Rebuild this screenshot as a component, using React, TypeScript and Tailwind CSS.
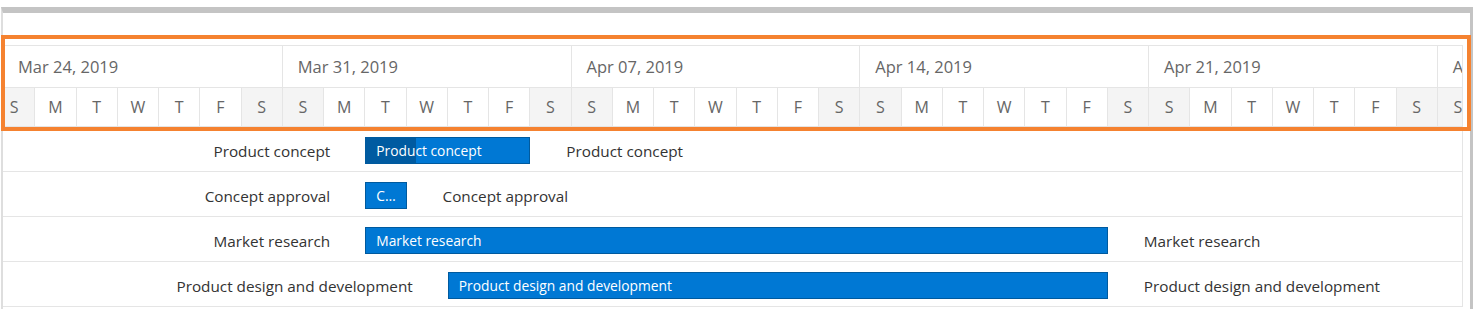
import React from "react";

const DAY = 41.25;
const DAYS = ["S", "M", "T", "W", "T", "F", "S"];
const weeks = ["Mar 24, 2019", "Mar 31, 2019", "Apr 07, 2019", "Apr 14, 2019", "Apr 21, 2019", "Apr 28, 2019"];

type Task = { name: string; start: number; end: number; progress?: number };

// start / end are day indexes counted from Sun Mar 24
const tasks: Task[] = [
  { name: "Product concept", start: 9, end: 13, progress: 50 },
  { name: "Concept approval", start: 9, end: 10 },
  { name: "Market research", start: 9, end: 27 },
  { name: "Product design and development", start: 11, end: 27 },
];

const TaskRow = ({ task }: { task: Task }) => {
  const width = (task.end - task.start) * DAY;
  return (
    <div className="flex h-[45px] items-center border-b border-[#e5e5e5] pt-[2px]">
      <span
        className="shrink-0 whitespace-nowrap pr-[35px] pt-[2px] text-right text-[15.3px] text-[#333]"
        style={{ width: task.start * DAY }}
      >
        {task.name}
      </span>
      <div
        className="relative flex h-[27px] shrink-0 items-center overflow-hidden border border-[#005a9e] bg-[#0078d4]"
        style={{ width }}
      >
        {task.progress ? (
          <div className="absolute inset-y-0 left-0 bg-[#005ba1]" style={{ width: task.progress }} />
        ) : null}
        <span className="relative truncate px-[10px] pt-[2px] text-[13.8px] text-white">{task.name}</span>
      </div>
      <span className="shrink-0 whitespace-nowrap pl-[36px] pt-[2px] text-[15.3px] text-[#333]">{task.name}</span>
    </div>
  );
};

export default function App() {
  return (
    <div
      className="relative h-[319px] w-[1473px] overflow-hidden bg-white pt-[7px] pl-[1px]"
      style={{ fontFamily: '"Open Sans", "Noto Sans", sans-serif' }}
    >
      <div className="flex w-[1472px] border-t-[6px] border-r-[3px] border-l-2 border-t-[#c4c4c4] border-r-[#c4c4c4] border-l-[#dedede] pt-[32px] pb-[2px]">
        <div className="w-[1460px] shrink-0 overflow-hidden border-r border-[#e5e5e5]">
          <div className="ml-[-9px] w-[1740px]">
            {/* header */}
            <div className="border-y border-[#e5e5e5]">
              <div className="flex h-[42px] border-b border-[#e5e5e5]">
                {weeks.map((w, i) => (
                  <div
                    key={w}
                    className={`flex w-[288.75px] shrink-0 items-center border-r border-[#e5e5e5] pt-[2px] text-[16.5px] text-[#666] ${
                      i === 0 ? "pl-[24px]" : "pl-[15px]"
                    }`}
                  >
                    {w}
                  </div>
                ))}
              </div>
              <div className="flex h-[38px]">
                {weeks.map((w) =>
                  DAYS.map((d, j) => (
                    <div
                      key={w + j}
                      className={`flex w-[41.25px] shrink-0 items-center justify-center border-r border-[#e5e5e5] text-[16px] text-[#666] ${
                        j === 0 || j === 6 ? "bg-[#f4f4f4]" : "bg-white"
                      }`}
                    >
                      {d}
                    </div>
                  ))
                )}
              </div>
            </div>
            {/* rows */}
            {tasks.map((t) => (
              <TaskRow key={t.name} task={t} />
            ))}
          </div>
        </div>
      </div>
      {/* highlight frame around the timeline header */}
      <div className="pointer-events-none absolute top-[35px] left-[1px] h-[96px] w-[1470px] border-4 border-[#f58230]" />
    </div>
  );
}
